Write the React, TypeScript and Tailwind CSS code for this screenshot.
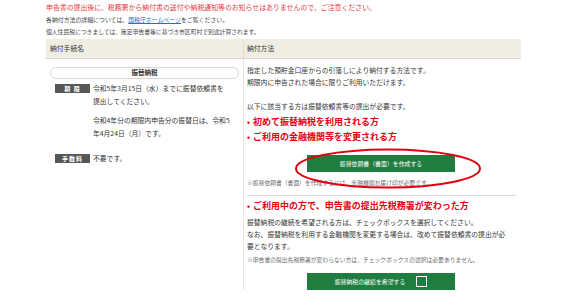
import React from "react";

const font = "font-['Noto_Sans_CJK_JP','Noto_Sans',sans-serif]";

const Label: React.FC<{ text: string }> = ({ text }) => (
  <span className="mt-[2px] flex h-[9px] w-[35px] shrink-0 items-center justify-center bg-[#575757] text-[6px] font-bold leading-[9px] tracking-[1px] text-white">
    {text}
  </span>
);

const Bullet: React.FC<{ children: React.ReactNode }> = ({ children }) => (
  <p className="flex items-center text-[9px] font-bold leading-[15px] text-[#e60012]">
    <span className="mr-[3px] text-[8px]">•</span>
    {children}
  </p>
);

const App: React.FC = () => {
  return (
    <div className={`h-[297px] w-[586px] overflow-hidden bg-white ${font} text-[#363636]`}>
      <div className="ml-[46px] w-[475px]">
        <p className="text-[6.9px] leading-[14px] text-[#e8383d] whitespace-nowrap">
          申告書の提出後に、税務署から納付書の送付や納税通知等のお知らせはありませんので、ご注意ください。
        </p>
        <p className="text-[5.9px] leading-[12px] text-[#4a4a4a]">
          各納付方法の詳細については、
          <span className="text-[#2a6ebb] underline">国税庁ホームページ</span>
          をご覧ください。
        </p>
        <p className="text-[5.8px] leading-[12px] text-[#4a4a4a]">
          個人住民税につきましては、確定申告書等に基づき市区町村で別途計算されます。
        </p>

        <div className="mt-[1px] flex h-[20px] items-center border-b border-[#dcd7c6] bg-[#f0ede2] text-[6.8px] text-[#333]">
          <div className="flex h-full w-[198px] items-center border-r border-[#e2ddd0] pl-[4px]">納付手続名</div>
          <div className="pl-[3px]">納付方法</div>
        </div>

        <div className="flex">
          {/* left column */}
          <div className="w-[198px] border-r border-[#e4e4e4] pt-[8px]">
            <div className="mx-[4px] flex h-[12px] items-center justify-center rounded-full border border-[#d8d8d8] text-[6.5px] font-bold text-[#333]">
              振替納税
            </div>
            <div className="mt-[3px] flex gap-[3px] pl-[9px] text-[6.8px] leading-[13px]">
              <Label text="期 限" />
              <div>
                <p>
                  令和5年3月15日（水）までに振替依頼書を
                  <br />
                  提出してください。
                </p>
                <p className="mt-[6px]">
                  令和4年分の期限内申告分の振替日は、令和5
                  <br />
                  年4月24日（月）です。
                </p>
              </div>
            </div>
            <div className="mt-[12px] flex gap-[3px] pl-[9px] text-[6.8px] leading-[13px]">
              <Label text="手数料" />
              <p>不要です。</p>
            </div>
          </div>

          {/* right column */}
          <div className="w-[277px] pl-[3px] pr-[4px] pt-[5px] text-[6.8px] leading-[12px]">
            <p>指定した預貯金口座からの引落しにより納付する方法です。</p>
            <p>期限内に申告された場合に限りご利用いただけます。</p>
            <p className="mt-[12px]">以下に該当する方は振替依頼書等の提出が必要です。</p>
            <div className="mt-[2px]">
              <Bullet>初めて振替納税を利用される方</Bullet>
              <Bullet>ご利用の金融機関等を変更される方</Bullet>
            </div>
            <div className="relative ml-[60px] mt-[11px] w-[148px]">
              <div className="flex h-[17px] items-center justify-center bg-[#1f7d3f] text-[5.9px] text-white">
                振替依頼書（書面）を作成する
              </div>
              <svg
                className="absolute left-[-13px] top-[-7px]"
                width="188"
                height="41"
                viewBox="0 0 188 41"
              >
                <ellipse cx="94" cy="20.5" rx="92" ry="19" fill="none" stroke="#e3000f" strokeWidth="2" />
              </svg>
            </div>
            <p className="mt-[6px] text-[5.8px] leading-[10px] text-[#6e6e6e]">
              ※振替依頼書（書面）を作成するには、金融機関お届け印が必要です。
            </p>
            <div className="mt-[7px] mr-[1px] border-t border-[#d6d6d6]" />
            <div className="mt-[2px]">
              <Bullet>ご利用中の方で、申告書の提出先税務署が変わった方</Bullet>
            </div>
            <div className="mt-[3px]">
              <p>振替納税の継続を希望される方は、チェックボックスを選択してください。</p>
              <p>
                なお、振替納税を利用する金融機関を変更する場合は、改めて振替依頼書の提出が必
                <br />
                要となります。
              </p>
            </div>
            <p className="mt-[3px] text-[5.8px] leading-[10px] text-[#6e6e6e]">
              ※申告書の提出先税務署が変わらない方は、チェックボックスの選択は必要ありません。
            </p>
            <div className="ml-[60px] mt-[8px] flex h-[17px] w-[148px] items-center justify-center gap-[11px] bg-[#1f7d3f] text-[5.9px] text-white">
              <span>振替納税の継続を希望する</span>
              <span className="h-[11px] w-[11px] border-[1.5px] border-white" />
            </div>
          </div>
        </div>
      </div>
    </div>
  );
};

export default App;
